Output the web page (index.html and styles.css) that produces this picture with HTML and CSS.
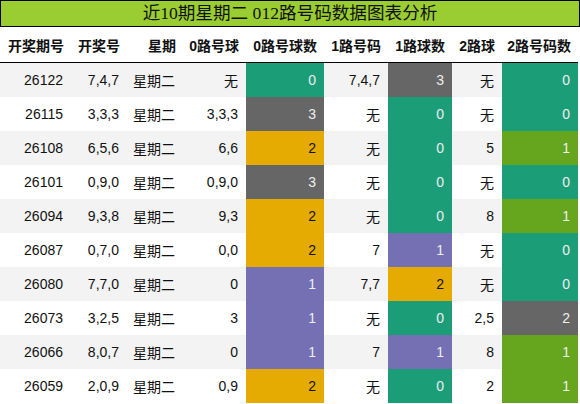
FILE: index.html
```html
<!DOCTYPE html>
<html lang="zh">
<head>
<meta charset="utf-8">
<link rel="stylesheet" href="styles.css">
</head>
<body>
<div class="title">近10期星期二 012路号码数据图表分析</div>
<table class="grid">
<colgroup>
<col class="c1"><col class="c2"><col class="c3"><col class="c4"><col class="c5"><col class="c6"><col class="c7"><col class="c8"><col class="c9">
</colgroup>
<thead>
<tr><th>开奖期号</th><th>开奖号</th><th>星期</th><th>0路号球</th><th>0路号球数</th><th>1路号码</th><th>1路球数</th><th>2路球</th><th>2路号码数</th></tr>
</thead>
<tbody>
<tr><td>26122</td><td>7,4,7</td><td>星期二</td><td>无</td><td class="g">0</td><td>7,4,7</td><td class="k">3</td><td>无</td><td class="g">0</td></tr>
<tr><td>26115</td><td>3,3,3</td><td>星期二</td><td>3,3,3</td><td class="k">3</td><td>无</td><td class="g">0</td><td>无</td><td class="g">0</td></tr>
<tr><td>26108</td><td>6,5,6</td><td>星期二</td><td>6,6</td><td class="o">2</td><td>无</td><td class="g">0</td><td>5</td><td class="l">1</td></tr>
<tr><td>26101</td><td>0,9,0</td><td>星期二</td><td>0,9,0</td><td class="k">3</td><td>无</td><td class="g">0</td><td>无</td><td class="g">0</td></tr>
<tr><td>26094</td><td>9,3,8</td><td>星期二</td><td>9,3</td><td class="o">2</td><td>无</td><td class="g">0</td><td>8</td><td class="l">1</td></tr>
<tr><td>26087</td><td>0,7,0</td><td>星期二</td><td>0,0</td><td class="o">2</td><td>7</td><td class="p">1</td><td>无</td><td class="g">0</td></tr>
<tr><td>26080</td><td>7,7,0</td><td>星期二</td><td>0</td><td class="p">1</td><td>7,7</td><td class="o">2</td><td>无</td><td class="g">0</td></tr>
<tr><td>26073</td><td>3,2,5</td><td>星期二</td><td>3</td><td class="p">1</td><td>无</td><td class="g">0</td><td>2,5</td><td class="k">2</td></tr>
<tr><td>26066</td><td>8,0,7</td><td>星期二</td><td>0</td><td class="p">1</td><td>7</td><td class="p">1</td><td>8</td><td class="l">1</td></tr>
<tr><td>26059</td><td>2,0,9</td><td>星期二</td><td>0,9</td><td class="o">2</td><td>无</td><td class="g">0</td><td>2</td><td class="l">1</td></tr>
</tbody>
</table>
</body>
</html>
```
FILE: styles.css
```css
html, body {
  margin: 0;
  padding: 0;
  background: #fff;
}
body {
  font-family: "Liberation Sans", "Noto Sans CJK SC", sans-serif;
  color: #111;
  width: 580px;
}
.title {
  box-sizing: border-box;
  width: 580px;
  height: 27px;
  border: 1px solid #000;
  background: #9acd32;
  text-align: center;
  font-family: "Liberation Serif", "Noto Sans CJK SC", serif;
  font-size: 17.6px;
  line-height: 25px;
  color: #111;
}
.grid {
  width: 578px;
  table-layout: fixed;
  border-collapse: collapse;
  border-spacing: 0;
  font-size: 14px;
}
.c1 { width: 71px; }
.c2 { width: 56px; }
.c3 { width: 56px; }
.c4 { width: 63px; }
.c5 { width: 78px; }
.c6 { width: 64px; }
.c7 { width: 64px; }
.c8 { width: 50px; }
.c9 { width: 76px; }
.grid th {
  height: 35px;
  padding: 0 7px 0 0;
  text-align: right;
  font-weight: bold;
  border-bottom: 1px solid #000;
  white-space: nowrap;
  color: #111;
}
.grid td {
  height: 34px;
  padding: 0 8px 0 0;
  text-align: right;
  white-space: nowrap;
}
.grid tbody tr:nth-child(odd) { background: #f3f3f3; }
.grid tbody tr:nth-child(even) { background: #fff; }
.grid td.g { background: #1b9e77; color: #eee; }
.grid td.k { background: #666666; color: #eee; }
.grid td.o { background: #e6ab02; color: #111; }
.grid td.p { background: #7570b3; color: #eee; }
.grid td.l { background: #66a61e; color: #eee; }
```
